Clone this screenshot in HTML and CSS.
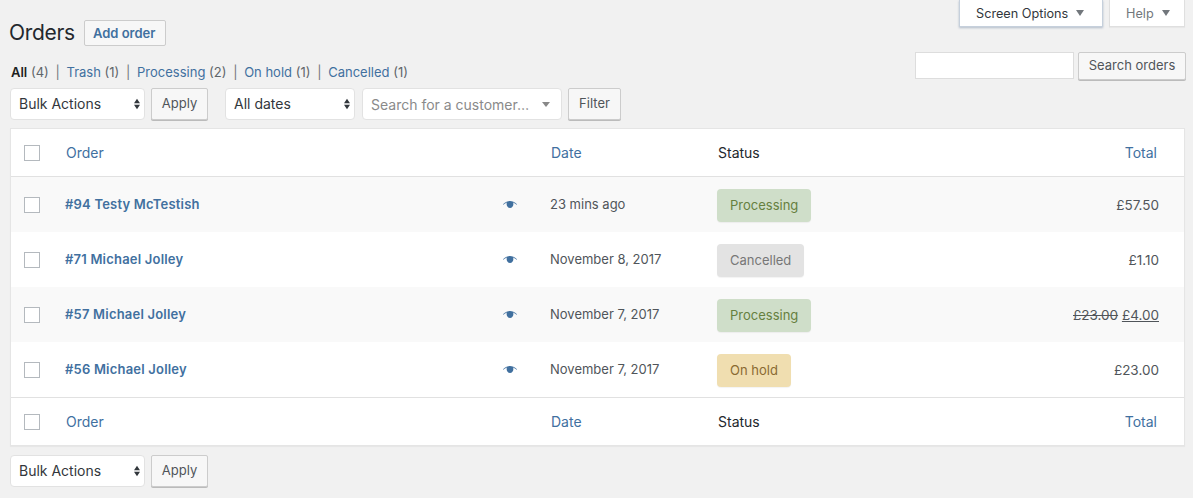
FILE: index.html
```html
<!DOCTYPE html>
<html lang="en">
<head>
<meta charset="utf-8">
<title>Orders</title>
<link rel="stylesheet" href="styles.css">
</head>
<body>
<div class="screen-meta">
  <button class="meta-tab meta-active">Screen Options <svg class="meta-caret" viewBox="0 0 8 6"><path d="M0 0h8L4 6z"/></svg></button>
  <button class="meta-tab meta-help">Help <svg class="meta-caret" viewBox="0 0 8 6"><path d="M0 0h8L4 6z"/></svg></button>
</div>
<div class="heading">
  <h1>Orders</h1>
  <a class="add-new" href="#">Add order</a>
</div>
<div class="views-row">
  <ul class="views">
    <li><b>All</b> <span class="count">(4)</span></li>
    <li><a href="#">Trash</a> <span class="count">(1)</span></li>
    <li><a href="#">Processing</a> <span class="count">(2)</span></li>
    <li><a href="#">On hold</a> <span class="count">(1)</span></li>
    <li><a href="#">Cancelled</a> <span class="count">(1)</span></li>
  </ul>
  <form class="search">
    <input class="search-input" type="text" aria-label="Search orders">
    <button class="btn btn-search" type="button">Search orders</button>
  </form>
</div>
<div class="toolbar">
  <span class="select select-bulk"><select><option>Bulk Actions</option></select><svg class="updown" viewBox="0 0 7 12"><path d="M3.5 0 7 5H0zM3.5 12 0 7h7z"/></svg></span>
  <button class="btn btn-apply" type="button">Apply</button>
  <span class="select select-dates"><select><option>All dates</option></select><svg class="updown" viewBox="0 0 7 12"><path d="M3.5 0 7 5H0zM3.5 12 0 7h7z"/></svg></span>
  <div class="customer"><span class="customer-text">Search for a customer…</span><svg class="customer-caret" viewBox="0 0 8 5"><path d="M0 0h8L4 5z"/></svg></div>
  <button class="btn btn-filter" type="button">Filter</button>
</div>
<table class="orders">
  <colgroup><col class="c-check"><col class="c-order"><col class="c-eye"><col class="c-date"><col class="c-status"><col></colgroup>
  <thead>
    <tr><th class="check"><input type="checkbox" aria-label="Select all"></th><th class="col-order"><a href="#">Order</a></th><th></th><th class="col-date"><a href="#">Date</a></th><th class="col-status">Status</th><th class="col-total"><a href="#">Total</a></th></tr>
  </thead>
  <tbody>
    <tr class="alt"><td class="check"><input type="checkbox" aria-label="Select order 94"></td><td><a class="order-link" href="#">#94 Testy McTestish</a></td><td class="eye"><svg viewBox="0 0 14 8"><path d="M0 3.200C2.500.800 4.700 0 7 0s4.500.800 7 3.200l-.5.500C11.800 2.300 10.900 1.800 10 1.500c.3.500.4 1 .4 1.500C10.400 5 9 7 7 7S3.600 5 3.600 3c0-.5.100-1 .4-1.500-.900.300-1.800.800-3.500 2.200z"/></svg></td><td class="date">23 mins ago</td><td class="status-cell"><mark class="status processing">Processing</mark></td><td class="total">£57.50</td></tr>
    <tr><td class="check"><input type="checkbox" aria-label="Select order 71"></td><td><a class="order-link" href="#">#71 Michael Jolley</a></td><td class="eye"><svg viewBox="0 0 14 8"><path d="M0 3.200C2.500.800 4.700 0 7 0s4.500.800 7 3.200l-.5.500C11.800 2.300 10.900 1.800 10 1.500c.3.500.4 1 .4 1.500C10.400 5 9 7 7 7S3.600 5 3.600 3c0-.5.100-1 .4-1.500-.900.300-1.800.800-3.500 2.200z"/></svg></td><td class="date">November 8, 2017</td><td class="status-cell"><mark class="status cancelled">Cancelled</mark></td><td class="total">£1.10</td></tr>
    <tr class="alt"><td class="check"><input type="checkbox" aria-label="Select order 57"></td><td><a class="order-link" href="#">#57 Michael Jolley</a></td><td class="eye"><svg viewBox="0 0 14 8"><path d="M0 3.200C2.500.800 4.700 0 7 0s4.500.800 7 3.200l-.5.500C11.800 2.300 10.900 1.800 10 1.500c.3.500.4 1 .4 1.500C10.400 5 9 7 7 7S3.600 5 3.600 3c0-.5.100-1 .4-1.500-.900.300-1.800.800-3.500 2.200z"/></svg></td><td class="date">November 7, 2017</td><td class="status-cell"><mark class="status processing">Processing</mark></td><td class="total"><del>£23.00</del> <ins>£4.00</ins></td></tr>
    <tr><td class="check"><input type="checkbox" aria-label="Select order 56"></td><td><a class="order-link" href="#">#56 Michael Jolley</a></td><td class="eye"><svg viewBox="0 0 14 8"><path d="M0 3.200C2.500.800 4.700 0 7 0s4.500.800 7 3.200l-.5.500C11.800 2.300 10.900 1.800 10 1.500c.3.500.4 1 .4 1.500C10.400 5 9 7 7 7S3.600 5 3.600 3c0-.5.100-1 .4-1.500-.900.300-1.800.800-3.500 2.200z"/></svg></td><td class="date">November 7, 2017</td><td class="status-cell"><mark class="status on-hold">On hold</mark></td><td class="total">£23.00</td></tr>
  </tbody>
  <tfoot>
    <tr><th class="check"><input type="checkbox" aria-label="Select all"></th><th class="col-order"><a href="#">Order</a></th><th></th><th class="col-date"><a href="#">Date</a></th><th class="col-status">Status</th><th class="col-total"><a href="#">Total</a></th></tr>
  </tfoot>
</table>
<div class="toolbar toolbar-bottom">
  <span class="select select-bulk"><select><option>Bulk Actions</option></select><svg class="updown" viewBox="0 0 7 12"><path d="M3.5 0 7 5H0zM3.500 12 0 7h7z"/></svg></span>
  <button class="btn btn-apply" type="button">Apply</button>
</div>
</body>
</html>
```
FILE: styles.css
```css
* { box-sizing: border-box; }
html, body { height: 100%; }
body {
  margin: 0;
  padding: 0 7px 0 10px;
  background: #f1f1f1;
  color: #50555a;
  font: 13px/20px Inter, "Liberation Sans", sans-serif;
  overflow: hidden;
}
a { color: #41709f; text-decoration: none; }
button, select, input { font: inherit; margin: 0; }

.screen-meta { display: flex; justify-content: flex-end; gap: 6px; height: 27px; margin: 0 1px -7px 0; }
.meta-tab {
  height: 27px;
  padding: 2px 14px 0 16px;
  border: 1px solid #dfdfdf;
  border-top: 0;
  background: #fff;
  color: #72777c;
  box-shadow: 0 1px 1px rgba(0,0,0,.04);
  display: flex;
  align-items: center;
  gap: 8px;
  font-size: 12.700px;
}
.meta-active { width: 144px; color: #32373c; border-color: #c6d0dc; box-shadow: 0 1px 2px rgba(60,90,130,.35); }
.meta-help { width: 76px; }
.meta-caret { width: 8px; height: 6px; fill: #72777c; margin-top: -2px; }

.heading { display: flex; align-items: center; height: 26px; }
h1 { margin: 0 0 0 -1px; font-size: 21px; font-weight: 400; line-height: 26px; color: #23282d; letter-spacing: -.3px; }
.add-new {
  margin-left: 9px;
  height: 26px;
  padding: 0 10px 0 8px;
  border: 1px solid #ccc;
  border-radius: 2px;
  background: #f7f7f7;
  font-size: 13px;
  font-weight: 600;
  line-height: 24px;
}

.views-row { display: flex; justify-content: space-between; align-items: flex-start; margin-top: 6px; height: 34px; }
.views { list-style: none; display: flex; margin: 10px 0 0 1px; padding: 0; font-size: 13px; line-height: 20px; }
.views li + li::before { content: "|"; margin: 0 6.700px; color: #72777c; }
.views b { font-weight: 600; color: #1d1f22; }
.count { color: #60656a; }
.search { display: flex; gap: 4px; }
.search-input { width: 159px; height: 27px; border: 1px solid #ddd; background: #fff; }

.btn {
  height: 28px;
  padding: 0 10px 2px;
  border: 1px solid #ccc;
  border-radius: 2px;
  background: #f7f7f7;
  color: #50555a;
  font-size: 13px;
  box-shadow: 0 1px 0 #bbb;
}
.btn-search { width: 108px; padding: 0 0 2px; }

.toolbar { display: flex; align-items: flex-start; margin-top: 2px; height: 33px; }
.select { position: relative; display: block; }
.select select {
  appearance: none;
  -webkit-appearance: none;
  display: block;
  width: 100%;
  height: 32px;
  padding: 0 8px;
  border: 1px solid #e2e2e2;
  border-radius: 4px;
  background: #fff;
  color: #32373c;
  font-size: 14px;
}
.select-bulk { width: 135px; }
.select-dates { width: 130px; margin-left: 17px; }
.updown { position: absolute; right: 5px; top: 10px; width: 6px; height: 12px; fill: #32373c; }
.btn-apply { width: 57px; height: 32px; margin-left: 6px; padding: 0 0 2px; }
.customer {
  width: 200px;
  height: 32px;
  margin-left: 7px;
  padding: 0 11px 0 8px;
  display: flex;
  align-items: center;
  justify-content: space-between;
  border: 1px solid #e2e2e2;
  border-radius: 4px;
  background: #fff;
  color: #8a8a8a;
  font-size: 14px;
}
.customer-text { padding-top: 2px; }
.customer-caret { width: 8px; height: 5px; fill: #888; }
.btn-filter { width: 53px; height: 32px; margin-left: 6px; padding: 0 0 2px; }

.orders {
  width: 1175px;
  table-layout: fixed;
  border-collapse: separate;
  border-spacing: 0;
  margin-top: 7px;
  background: #fff;
  border: 1px solid #e5e5e5;
  box-shadow: 0 1px 1px rgba(0,0,0,.04);
}
.c-check { width: 54px; }
.c-order { width: 431px; }
.c-eye { width: 54px; }
.c-date { width: 167px; }
.c-status { width: 300px; }
thead th { height: 48px; border-bottom: 1px solid #e1e1e1; }
tfoot th { height: 48px; border-top: 1px solid #e1e1e1; }
tbody td { height: 55px; }
.alt { background: #f9f9f9; }
th { padding: 0; font-weight: 400; text-align: left; font-size: 14px; color: #23282d; }
td { padding: 0; vertical-align: middle; }
.check { padding-left: 13px; }
td.check { padding-top: 1px; }
.check input {
  appearance: none;
  -webkit-appearance: none;
  display: block;
  width: 16px;
  height: 16px;
  margin: 0;
  border: 1px solid #b4b9be;
  background: #fff;
}
.col-order a { margin-left: 1px; }
.col-date a { margin-left: 1px; }
.col-status { padding-left: 1px; }
.order-link { font-weight: 600; display: block; margin-top: -2px; letter-spacing: .2px; }
.eye svg { display: block; width: 14px; height: 8px; fill: #41709f; margin: 0 0 0 7px; }
.date { padding-bottom: 2px; }
.status-cell { padding-top: 2px; }
.status {
  display: inline-block;
  height: 33px;
  padding: 0 13px;
  border-radius: 4px;
  line-height: 32px;
  font-size: 13px;
  box-shadow: 0 1px 1px rgba(0,0,0,.05);
}
.processing { background: #cfdec9; color: #66803f; }
.cancelled { background: #e3e3e3; color: #777; }
.on-hold { background: #f0deb0; color: #8a6a32; }
.total { text-align: right; padding: 0 25px 0 0; font-size: 13.500px; }
.col-total { text-align: right; padding-right: 27px; }
ins { text-decoration: underline; }
.toolbar-bottom { margin-top: 9px; }
```
